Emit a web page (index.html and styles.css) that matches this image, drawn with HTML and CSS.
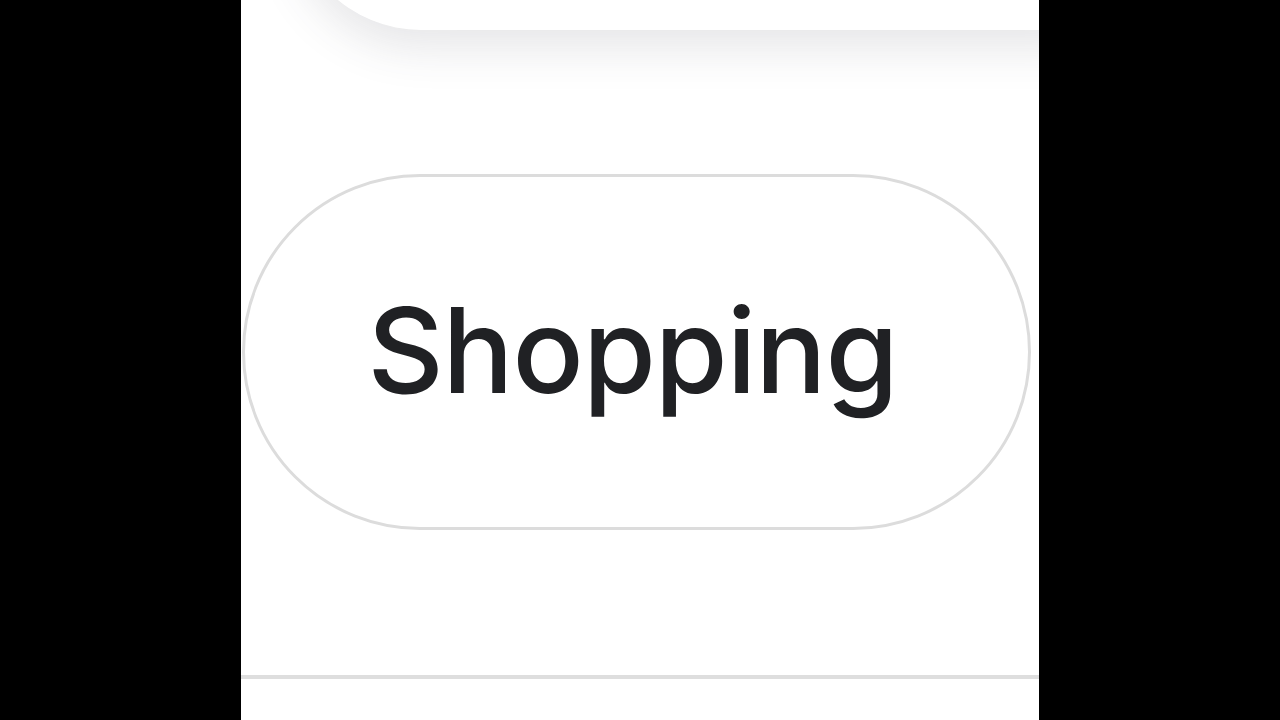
FILE: index.html
```html
<!DOCTYPE html>
<html>
<head>
<meta charset="utf-8">
<link rel="stylesheet" href="styles.css">
</head>
<body>
<div class="frame">
  <div class="card"></div>
  <div class="chip-row">
    <div class="chip">Shopping</div>
  </div>
  <div class="divider"></div>
</div>
</body>
</html>
```
FILE: styles.css
```css
html, body {
  margin: 0;
  padding: 0;
  background: #000;
  height: 720px;
  overflow: hidden;
}
.frame {
  width: 798px;
  height: 720px;
  margin: 0 auto;
  background: #fff;
  overflow: hidden;
  display: flex;
  flex-direction: column;
}
.card {
  height: 130px;
  margin-top: -100px;
  margin-left: 50px;
  margin-right: -40px;
  background: #fff;
  border-radius: 0 0 0 170px;
  box-shadow: 0 18px 45px rgba(60, 64, 80, 0.13);
  flex: none;
}
.chip-row {
  padding-top: 144px;
  padding-left: 1px;
  flex: none;
}
.chip {
  width: 775px;
  height: 346px;
  border: 3px solid #dcdcdc;
  border-radius: 200px;
  display: flex;
  align-items: center;
  justify-content: center;
  font-family: "Inter", sans-serif;
  font-weight: 500;
  font-size: 118px;
  color: #202124;
  letter-spacing: -1px;
  padding-bottom: 4px;
  padding-right: 8px;
  box-sizing: content-box;
}
.divider {
  margin-top: 145px;
  height: 4px;
  background: #dedede;
  flex: none;
}
```
